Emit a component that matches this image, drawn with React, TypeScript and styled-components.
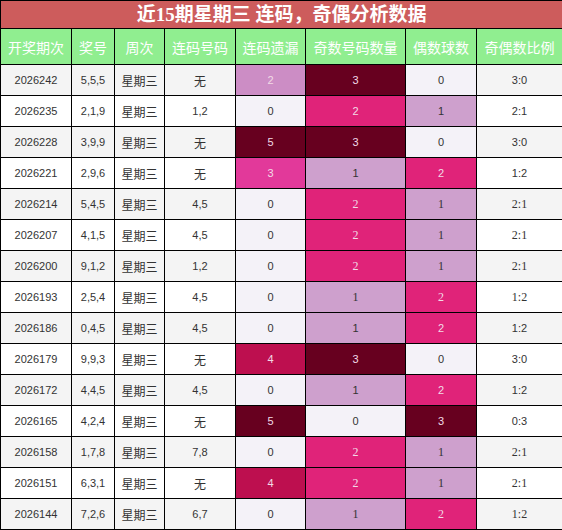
import React from 'react';
import styled, { createGlobalStyle } from 'styled-components';

type TRow = [string, string, string, number, number, number, string];

const rows : TRow[] = [
  ['2026242', '5,5,5', '无', 2, 3, 0, '3:0'],
  ['2026235', '2,1,9', '1,2', 0, 2, 1, '2:1'],
  ['2026228', '3,9,9', '无', 5, 3, 0, '3:0'],
  ['2026221', '2,9,6', '无', 3, 1, 2, '1:2'],
  ['2026214', '5,4,5', '4,5', 0, 2, 1, '2:1'],
  ['2026207', '4,1,5', '4,5', 0, 2, 1, '2:1'],
  ['2026200', '9,1,2', '1,2', 0, 2, 1, '2:1'],
  ['2026193', '2,5,4', '4,5', 0, 1, 2, '1:2'],
  ['2026186', '0,4,5', '4,5', 0, 1, 2, '1:2'],
  ['2026179', '9,9,3', '无', 4, 3, 0, '3:0'],
  ['2026172', '4,4,5', '4,5', 0, 1, 2, '1:2'],
  ['2026165', '4,2,4', '无', 5, 0, 3, '0:3'],
  ['2026158', '1,7,8', '7,8', 0, 2, 1, '2:1'],
  ['2026151', '6,3,1', '无', 4, 2, 1, '2:1'],
  ['2026144', '7,2,6', '6,7', 0, 1, 2, '1:2'],
];

const headers = ['开奖期次', '奖号', '周次', '连码号码', '连码遗漏', '奇数号码数量', '偶数球数', '奇偶数比例'];
const widths = [71, 43, 50, 71, 70, 100, 71, 86];

// 连码遗漏 scale (0..5) and count scale (0..3)
const missColors : Record<number, string> = {
  0: '#f4f2f8', 1: '#e4d8ea', 2: '#cc8dc5', 3: '#e2399a', 4: '#bd0f4f', 5: '#67001f',
};
const countColors : Record<number, string> = {
  0: '#f4f2f8', 1: '#cea0cd', 2: '#e02379', 3: '#67001f',
};

const serifRows = [4, 5, 6, 7, 12, 13, 14];

const GlobalStyle = createGlobalStyle`
  body {
    margin: 0;
    background: #fff;
    font-family: "Liberation Sans", "Noto Sans CJK SC", sans-serif;
  }
`;

function App() {
  return (
    <>
      <GlobalStyle />
      <Table>
        <colgroup>
          {widths.map((w, i) => <col key={i} style={{ width: w }} />)}
        </colgroup>
        <thead>
          <TitleRow>
            <TitleCell colSpan={8}>近15期星期三 连码，奇偶分析数据</TitleCell>
          </TitleRow>
          <HeadRow>
            {headers.map((h) => <HeadCell key={h}>{h}</HeadCell>)}
          </HeadRow>
        </thead>
        <tbody>
          {rows.map((r, i) => {
            const serif = serifRows.includes(i);
            return (
              <BodyRow key={r[0]} $gray={i % 2 === 0}>
                <Cell>{r[0]}</Cell>
                <Cell>{r[1]}</Cell>
                <Cell $cjk>星期三</Cell>
                <Cell $cjk={r[2] === '无'}>{r[2]}</Cell>
                <HeatCell $bg={missColors[r[3]]} $light={r[3] >= 2}>{r[3]}</HeatCell>
                <HeatCell $bg={countColors[r[4]]} $light={r[4] >= 2} $serif={serif}>{r[4]}</HeatCell>
                <HeatCell $bg={countColors[r[5]]} $light={r[5] >= 2} $serif={serif}>{r[5]}</HeatCell>
                <Cell $serif={serif}>{r[6]}</Cell>
              </BodyRow>
            );
          })}
        </tbody>
      </Table>
    </>
  );
}

const Table = styled.table`
  width: 562px;
  table-layout: fixed;
  border-collapse: collapse;
  border: 1px solid #000;
`;
const TitleRow = styled.tr`
  height: 28px;
`;
const TitleCell = styled.th`
  padding: 0;
  border: 1px solid #000;
  background-color: #cd5c5c;
  color: #fff;
  font-family: "Liberation Serif", "Noto Sans CJK SC", serif;
  font-size: 19px;
  font-weight: 700;
  text-align: center;
  line-height: 26px;
`;
const HeadRow = styled.tr`
  height: 36px;
  background-color: #90ee90;
`;
const HeadCell = styled.th`
  padding: 0;
  border: 1px solid #000;
  color: #fff;
  font-family: "Noto Sans CJK SC", sans-serif;
  font-size: 14px;
  font-weight: 400;
  text-align: center;
  white-space: nowrap;
`;
const BodyRow = styled.tr<{ $gray : boolean }>`
  height: 31px;
  background-color: ${(p) => (p.$gray ? '#f4f4f4' : '#fff')};
`;
const Cell = styled.td<{ $cjk? : boolean, $serif? : boolean }>`
  padding: 0;
  border: 1px solid #000;
  color: #333;
  text-align: center;
  font-family: ${(p) => (p.$serif ? '"Liberation Serif", serif' : '"Liberation Sans", "Noto Sans CJK SC", sans-serif')};
  font-size: ${(p) => (p.$cjk ? '12px' : p.$serif ? '12px' : '11px')};
`;
const HeatCell = styled(Cell)<{ $bg : string, $light : boolean }>`
  background-color: ${(p) => p.$bg};
  color: ${(p) => (p.$light ? '#f2dbe6' : '#333')};
`;

export default App;
